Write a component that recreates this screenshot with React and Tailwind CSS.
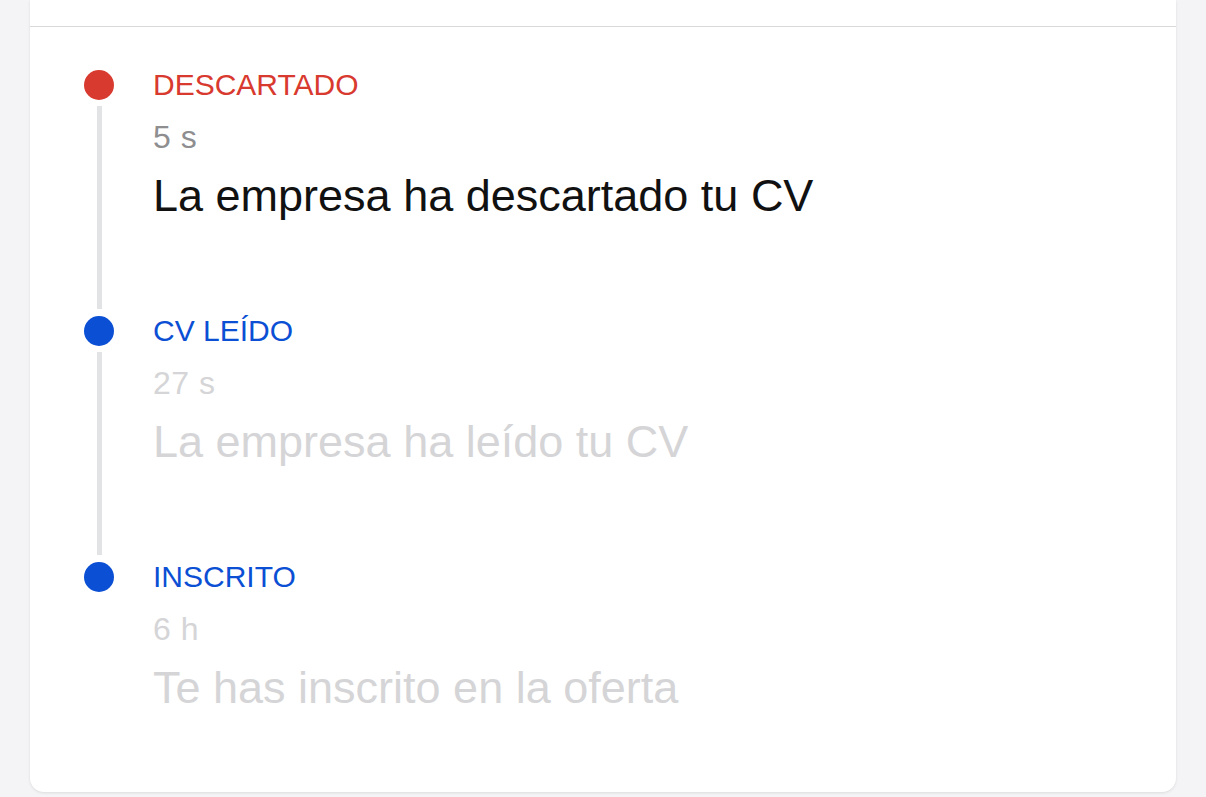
import React from "react";

// historial de estados de la candidatura, del más reciente al más antiguo
const events = [
  {
    id: "descartado",
    status: "DESCARTADO",
    time: "5 s",
    text: "La empresa ha descartado tu CV",
    dot: "bg-[#d93a2f]",
    label: "text-[#d93a2f]",
    current: true,
  },
  {
    id: "leido",
    status: "CV LEÍDO",
    time: "27 s",
    text: "La empresa ha leído tu CV",
    dot: "bg-[#0b4fd4]",
    label: "text-[#0b4fd4]",
  },
  {
    id: "inscrito",
    status: "INSCRITO",
    time: "6 h",
    text: "Te has inscrito en la oferta",
    dot: "bg-[#0b4fd4]",
    label: "text-[#0b4fd4]",
  },
];

function TimelineItem({ item, last }) {
  return (
    <li className="flex gap-[39px]">
      {/* columna del punto + línea que baja hasta el siguiente estado */}
      <div className="flex w-[30px] shrink-0 flex-col items-center">
        <span className={`mt-[3px] h-[30px] w-[30px] shrink-0 rounded-full ${item.dot}`} />
        {!last && <span className="mb-[4px] mt-[6px] w-[5px] flex-1 bg-[#e1e3e5]" />}
      </div>

      <div className={last ? "" : "pb-[90px]"}>
        <div className={`text-[30px] leading-[36px] ${item.label}`}>{item.status}</div>
        <div
          className={`mt-[16px] text-[32px] leading-[36px] tracking-[0.5px] ${
            item.current ? "text-[#8e8e90]" : "text-[#d5d5d7]"
          }`}
        >
          {item.time}
        </div>
        <div
          className={`mt-[14px] text-[45px] leading-[54px] ${
            item.current ? "text-[#111111]" : "text-[#d5d5d7]"
          }`}
        >
          {item.text}
        </div>
      </div>
    </li>
  );
}

export default function App() {
  return (
    <div
      className="min-h-screen bg-[#f4f4f6] px-[30px]"
      style={{ fontFamily: '"Liberation Sans", Arial, Helvetica, sans-serif' }}
    >
      <div className="rounded-b-[14px] bg-white shadow-[0_1px_3px_rgba(0,0,0,0.10)]">
        {/* cabecera de la tarjeta */}
        <div className="h-[27px] border-b border-[#d9d9db]" />

        <ol className="pb-[77px] pl-[54px] pt-[40px]">
          {events.map((item, idx) => (
            <TimelineItem key={item.id} item={item} last={idx === events.length - 1} />
          ))}
        </ol>
      </div>
    </div>
  );
}
